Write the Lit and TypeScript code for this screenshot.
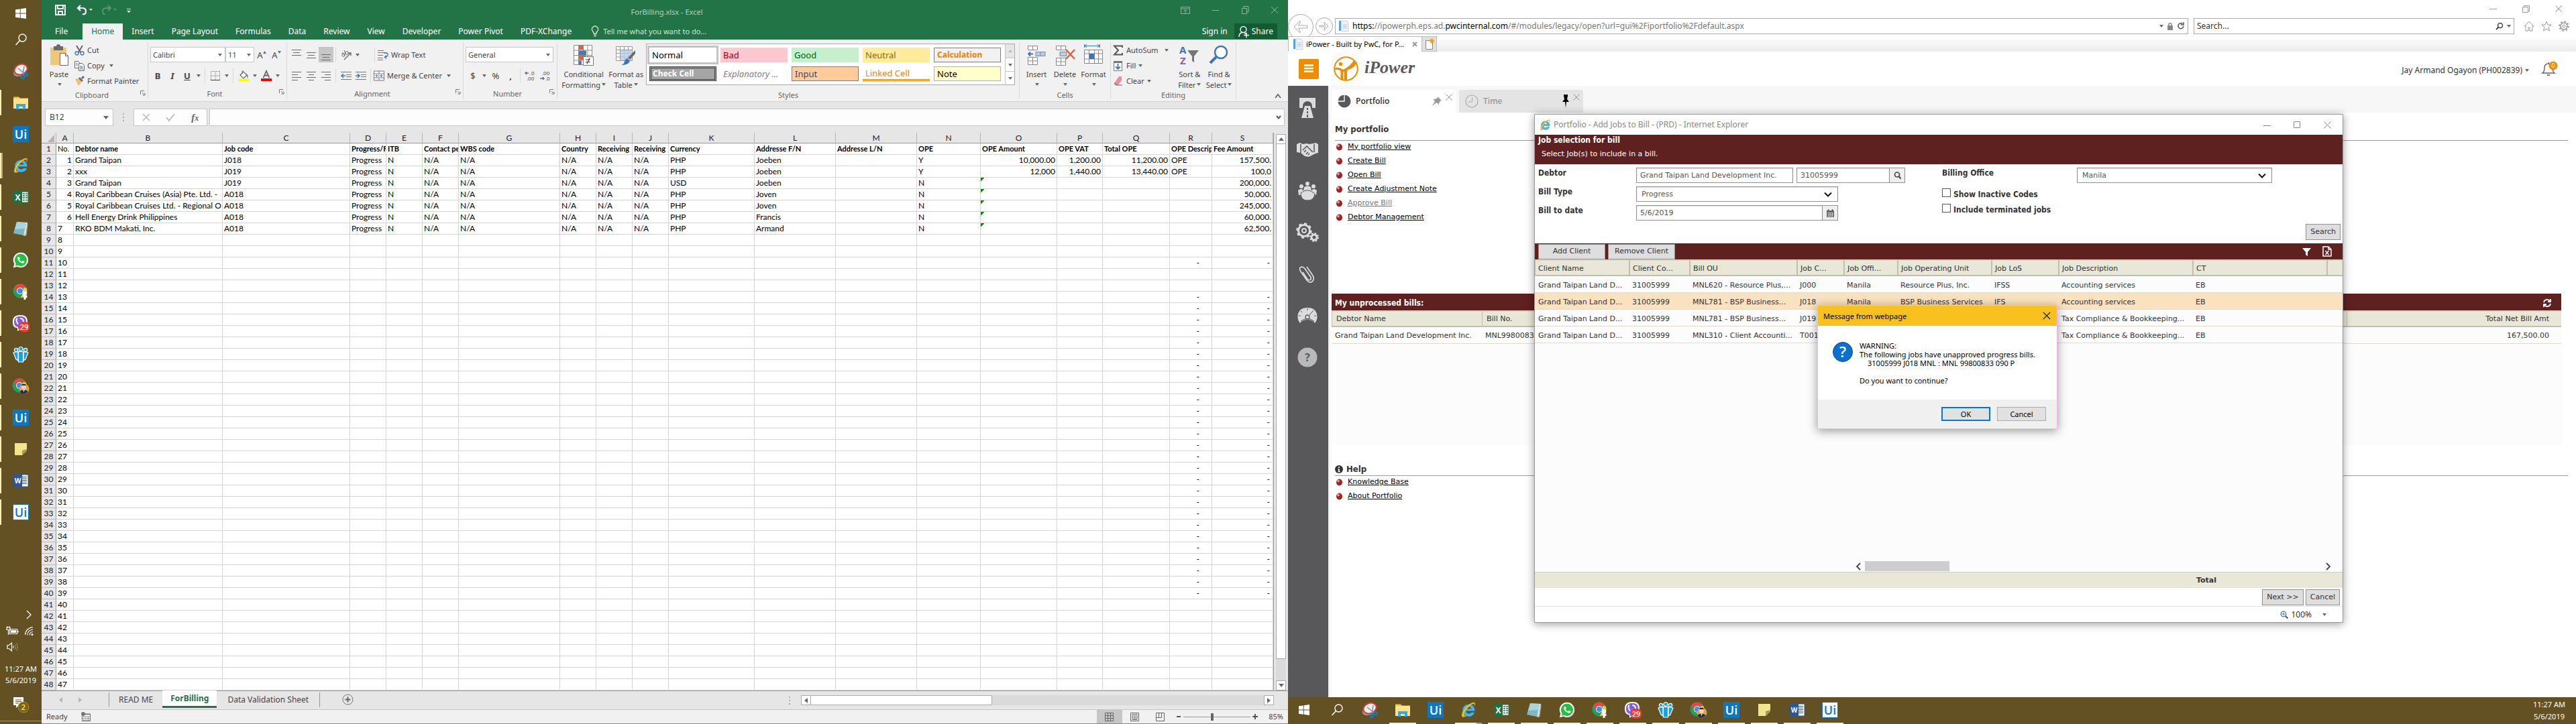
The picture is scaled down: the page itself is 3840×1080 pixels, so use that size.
import { LitElement, html, svg, css, nothing, TemplateResult, SVGTemplateResult } from "lit";
import { customElement, property } from "lit/decorators.js";
import { classMap } from "lit/directives/class-map.js";

/* ---------- shared helpers ---------- */

const pic = (w: number, h: number, body: SVGTemplateResult) =>
  html`<svg class="pic" width=${w} height=${h} viewBox="0 0 ${w} ${h}" aria-hidden="true">${body}</svg>`;

const base = css`
  * { box-sizing: border-box; }
  .pic { display: block; flex: none; overflow: visible; }
  button, input, select { font: inherit; color: inherit; margin: 0; border-radius: 0; }
  button { background: none; border: 0; padding: 0; display: flex; align-items: center; justify-content: center; white-space: nowrap; }
  select { appearance: none; }
  a { color: inherit; }
  table { border-collapse: separate; border-spacing: 0; table-layout: fixed; }
  th, td { text-align: left; font-weight: 400; white-space: nowrap; overflow: hidden; }
`;

const caret = html`<svg class="pic" width="6" height="4" viewBox="0 0 6 4" aria-hidden="true"><path d="M0 0h6L3 4z" fill="#666"/></svg>`;

/* ---------- application icons ---------- */

const uiIcon = (inverse: boolean) => pic(24, 24, svg`
  <rect x=".5" y=".5" width="23" height="23" fill=${inverse ? "#fff" : "#0b77c2"} stroke="#0b77c2"/>
  <text x="12" y="18.5" text-anchor="middle" font-family="Open Sans, sans-serif" font-size="18" font-weight="600" fill=${inverse ? "#0b77c2" : "#fff"}>Ui</text>`);

const ieBody = svg`
  <path d="M21.5 13.6H8.2c.3 2.700 2 4 4.300 4 1.700 0 2.800-.7 3.400-1.700h5.200c-1.300 3.800-4.700 5.900-8.700 5.900C7 21.800 3.200 18 3.200 12.800S7 3.800 12.400 3.800c5.500 0 9.200 4 9.100 9.800zM16.300 10.300c-.3-1.900-1.800-3.100-3.900-3.100s-3.700 1.200-4.100 3.100z" fill="#3fb8ec" stroke="#1b84c4" stroke-width=".5"/>
  <path d="M20.500 6.500C22.500 3 22 .9 19.600 1 16 1.200 9.500 5.500 5.500 11.500 1.600 17.400 1 22.500 4 22.600c1.500 0 3.500-.9 5.500-2.200-2.600.7-4.400.4-4.500-1.300-.2-2.600 3-7.500 6.700-11.100C15.200 4.600 18.500 2.300 20 2.800c1 .3 1 1.700.5 3.700z" fill="#f9c623" stroke="#c98f10" stroke-width=".4"/>`;

const chromeBody = svg`
  <circle cx="11" cy="11" r="10.500" fill="#1fa15d"/>
  <path d="M11 .5a10.500 10.500 0 0 1 9.100 5.200H11L6.400 13 2 5.700A10.500 10.500 0 0 1 11 .5z" fill="#dd4b3e"/>
  <path d="M20.300 6.200A10.500 10.500 0 0 1 11.500 21.500L16 13V6.200z" fill="#fcc934"/>
  <circle cx="11" cy="11" r="5" fill="#fff"/><circle cx="11" cy="11" r="4" fill="#4b87f0"/>`;

const apps: Record<string, TemplateResult> = {
  start: pic(24, 24, svg`<path d="M4 6.300l6.800-.9v6.200H4zm7.700-1L20 4v7.600h-8.300zM4 12.500h6.800v6.200L4 17.700zm7.700 0H20V20l-8.300-1.200z" fill="#fff"/>`),
  search: pic(24, 24, svg`<circle cx="14.500" cy="9.500" r="5.500" fill="none" stroke="#fff" stroke-width="1.400"/><path d="M10.500 13.600L4.500 20" stroke="#fff" stroke-width="1.500"/>`),
  snip: pic(24, 24, svg`<ellipse cx="10.500" cy="13" rx="10" ry="6.500" fill="#9a9a94" transform="rotate(-22 10.500 13)"/><ellipse cx="12" cy="9.500" rx="10" ry="7.500" fill="#ececea" stroke="#d13b3b" stroke-width="2" transform="rotate(-22 12 9.500)"/><path d="M8 8l11 9M17 5l-2 13" stroke="#8a8f94" stroke-width="1.500"/><circle cx="20.500" cy="17" r="2.300" fill="none" stroke="#1c79b8" stroke-width="2"/><circle cx="15" cy="21" r="2.200" fill="none" stroke="#1c79b8" stroke-width="2"/>`),
  folder: pic(24, 24, svg`<path d="M1 3.500h8l2 2h12v15H1z" fill="#f3c54b"/><path d="M1 6h22v15H1z" fill="#fde491"/><path d="M5 22v-8h14v8h-4v-4H9v4z" fill="#36a9e0"/>`),
  ui: uiIcon(false),
  ui2: uiIcon(true),
  ie: pic(24, 24, ieBody),
  excel: pic(24, 24, svg`<path d="M12 4h11v16H12z" fill="#fff" stroke="#1e7145"/><path d="M15 7h3m1 0h3M15 10h3m1 0h3M15 13h3m1 0h3M15 16.500h3m1 0h3" stroke="#1e7145" stroke-width="1.600"/><path d="M1 3.500L14 1v22L1 20.500z" fill="#1e7145"/><text x="7.500" y="16.500" text-anchor="middle" font-family="Open Sans, sans-serif" font-size="12" font-weight="700" fill="#fff">X</text>`),
  notepad: pic(24, 24, svg`<path d="M7 2l15 1-3 20-4-1z" fill="#dfe6e6"/><path d="M6 2l14 2-4 18-15-3z" fill="#7fb6c4"/><path d="M6 2l14 2-2 8L3 13z" fill="#a9d4dc"/><path d="M16 21l4 1 2-17" fill="none" stroke="#b5b9a4" stroke-width="1"/>`),
  whatsapp: pic(24, 24, svg`<path d="M12 .8A11 11 0 0 1 23 12 11 11 0 0 1 12 23c-1.900 0-3.700-.5-5.200-1.300L.8 23.300l1.600-5.800A11 11 0 0 1 12 .8z" fill="#fff"/><path d="M12 2.800a9.100 9.100 0 1 1-4.800 16.900l-3.500 1 1-3.400A9.100 9.100 0 0 1 12 2.800z" fill="#27bf43"/><path d="M8.300 7c-1.500.8-1.400 2.600-.5 4.300 1.400 2.700 3.600 4.700 6.500 5.300 1.600.3 3.400-.8 3.300-2.400l-2.700-1.400-1.500 1.600c-1.800-.7-3-2-3.700-3.500l1.100-1.400L9.600 7z" fill="#fff"/>`),
  chrome: pic(24, 24, svg`${chromeBody}<circle cx="18" cy="14.500" r="3.300" fill="#fff"/><path d="M14.500 17.500h7v3l-2 1V24h-3v-2.500z" fill="#fff"/>`),
  viber: pic(26, 26, svg`<path d="M12 1c8 0 11 3 11 10s-3 10.500-10 10.500L8 25v-4.500C3 19.500 1 17 1 11S4 1 12 1z" fill="#fff"/><path d="M12 3c7 0 9 2.500 9 8s-2.500 8.500-9 8.500l-3 2.500v-3c-4-1-6-2.500-6-8s3-8 9-8z" fill="#7d5fe0"/><path d="M8 6c-3 1.500-1 6 1 8.500M12 6c3 0 5 2 5 5" stroke="#fff" stroke-width="2" fill="none"/><rect x="10" y="11" width="16" height="15" rx="6" fill="#f4392f"/><text x="18" y="22.500" text-anchor="middle" font-family="Open Sans, sans-serif" font-size="11" font-weight="600" fill="#fff">29</text>`),
  teams: pic(24, 24, svg`<g fill="#16a3dd" stroke="#fff" stroke-width="1.200"><circle cx="5" cy="5" r="2.700"/><circle cx="19" cy="5" r="2.700"/><path d="M1 9l3-1h4v13l-3-2-2-5zM16 8h4l3 1-2 5-2 5-3 2z"/><circle cx="12" cy="3.500" r="3"/><path d="M8.500 7.500h7V23h-7z"/></g>`),
  chrome2: pic(26, 24, svg`${chromeBody}<circle cx="18" cy="16" r="7.500" fill="#d9a254"/><circle cx="17.500" cy="13.500" r="3.500" fill="#f0d0b8"/><path d="M14 11c1-3 6-3 7 0z" fill="#2b211c"/><path d="M11.500 20c2-3 10-3 12 0-2 4-10 5-12 0z" fill="#262b45"/><path d="M16.500 17.500h2l-1 4z" fill="#fff"/>`),
  note: pic(24, 24, svg`<path d="M3 3h18v11l-7 7H3z" fill="#f1e58f"/><path d="M21 12v2.500L14 21v-7z" fill="#a89b57"/>`),
  word: pic(24, 24, svg`<path d="M12 3h11v18H12z" fill="#fff" stroke="#2b579a"/><path d="M14 6.500h7M14 9h7M14 11.500h7M14 14h7M14 16.500h7" stroke="#2b579a" stroke-width="1.100"/><path d="M1 3.500L14 1v22L1 20.500z" fill="#2b579a"/><text x="7.500" y="16" text-anchor="middle" font-family="Open Sans, sans-serif" font-size="10" font-weight="700" fill="#fff">W</text>`),
};

const pinned: Array<[string, string, string]> = [
  ["start", "Start", "first"], ["search", "Search", ""], ["snip", "Snipping Tool", ""],
  ["folder", "File Explorer", "on"], ["ui", "UiPath Studio", ""], ["ie", "Internet Explorer", "on many"],
  ["excel", "Excel", "on"], ["notepad", "Notepad", "on"], ["whatsapp", "WhatsApp", "on"],
  ["chrome", "Chrome", "on"], ["viber", "Viber", "on"], ["teams", "Teams", "on"],
  ["chrome2", "Chrome profile", "on"], ["ui", "UiPath Robot", "on"], ["note", "Sticky Notes", "on"],
  ["word", "Word", "on"], ["ui2", "UiPath", "on"],
];

@customElement("task-bar")
class TaskBar extends LitElement {
  @property({ type: Boolean, reflect: true }) vertical = false;

  static styles = [base, css`
    :host { display: flex; background: #635124; color: #fff; font: 11px/18px "Noto Sans", "Open Sans", sans-serif; height: 40px; padding-left: 4px; }
    :host([vertical]) { flex-direction: column; width: 62px; height: auto; padding: 0; }
    .apps { display: flex; gap: 9px; }
    .app { width: 40px; height: 40px; border-bottom: 2px solid transparent; }
    .app.on { border-color: #ffeeb4; }
    .app.many { border-image: linear-gradient(90deg, #ffeeb4 78%, #b7a675 78%) 2; border-width: 0 0 2px; }
    :host([vertical]) .apps { flex-direction: column; padding-top: 8px; }
    :host([vertical]) .app { width: 60px; height: 38px; border-bottom: 0; border-left: 2px solid transparent; }
    :host([vertical]) .app.first { height: 23px; }
    :host([vertical]) .app.on { border-color: #ffeeb4; }
    :host([vertical]) .app.many { border-image: none; box-shadow: inset 2px 0 #b7a675; }
    .spring { flex: 1; }
    .clock { padding: 2px 16px 0 0; text-align: center; }
    :host([vertical]) .clock { padding: 0; line-height: 17px; }
    .tray { display: grid; grid-template-columns: 24px 24px; justify-content: center; justify-items: center; row-gap: 8px; padding-bottom: 16px; }
    .wide { grid-column: 2; }
    .notes { display: grid; justify-content: center; padding: 16px 0 12px; }
    .desk { border-top: 1px solid #a19771; height: 5px; }
  `];

  render() {
    return html`
      <div class="apps">${pinned.map(([k, name, cls]) => html`<button class="app ${cls}" aria-label=${name}>${apps[k]}</button>`)}</div>
      <div class="spring"></div>
      ${this.vertical ? html`
        <div class="tray">
          <span class="wide">${pic(16, 16, svg`<path d="M5 2l6 6-6 6" fill="none" stroke="#fff" stroke-width="1.300"/>`)}</span>
          ${pic(18, 16, svg`<path d="M4.500 5.500h11v7h-11zM17 7.500v3" fill="none" stroke="#fff" stroke-width="1.200"/><path d="M6 7h8v4H6z" fill="#fff"/><path d="M0 3h5v3.500H0zM2.500 6v8M1 1v2m3-2v2" fill="#635124" stroke="#fff" stroke-width="1.200"/>`)}
          ${pic(14, 16, svg`<g fill="none" stroke="#fff" stroke-width="1.100"><path d="M1.500 14A12 12 0 0 1 13 2.500M4.500 14.500A9 9 0 0 1 13 6M8 14.500a5 5 0 0 1 5-5"/></g><circle cx="12" cy="13.500" r="1.500" fill="#fff"/>`)}
          ${pic(18, 16, svg`<path d="M1 5.500h2.500l4-3.500v12l-4-3.500H1z" fill="none" stroke="#fff" stroke-width="1.200"/><path d="M9.500 6q1.500 2 0 4" fill="none" stroke="#fff"/><path d="M12 4q2.500 4 0 8M14.500 2.500q3.500 5.500 0 11" fill="none" stroke="#a0956f"/>`)}
        </div>` : nothing}
      <div class="clock">11:27 AM<br>5/6/2019</div>
      ${this.vertical ? html`
        <div class="notes">${pic(24, 24, svg`<path d="M1 1h15v12H9l-4 4v-4H1z" fill="#fff"/><path d="M4 5h9M4 7.500h9M4 10h5" stroke="#635124"/><circle cx="16" cy="16" r="8" fill="#846504" stroke="#b0924a" stroke-width=".8"/><text x="16" y="20" text-anchor="middle" font-family="Open Sans, sans-serif" font-size="11" fill="#fff">2</text>`)}</div>
        <div class="desk"></div>` : nothing}
    `;
  }
}

/* ---------- spreadsheet window ---------- */

const alignPic = (rows: Array<[number, number, number]>) =>
  pic(16, 16, svg`${rows.map(([y, a, b]) => svg`<path d="M${a} ${y}.5H${b}" stroke="#6a6a6a"/>`)}`);

const cols: Array<[string, number]> = [
  ["A", 26], ["B", 222], ["C", 190], ["D", 54], ["E", 54], ["F", 54], ["G", 151], ["H", 54], ["I", 54], ["J", 54],
  ["K", 128], ["L", 121], ["M", 121], ["N", 95], ["O", 114], ["P", 68], ["Q", 100], ["R", 63], ["S", 92],
];

const heads = ["No.", "Debtor name", "Job code", "Progress/F", "ITB", "Contact pe", "WBS code", "Country", "Receiving", "Receiving", "Currency",
  "Addresse F/N", "Addresse L/N", "OPE", "OPE Amount", "OPE VAT", "Total OPE", "OPE Descrip", "Fee Amount"];

const job = (n: string, debtor: string, code: string, cur: string, who: string, ope: string, a: string, v: string, t: string, d: string, fee: string) =>
  [n, debtor, code, "Progress", "N", "N/A", "N/A", "N/A", "N/A", "N/A", cur, who, "", ope, a, v, t, d, fee];

const jobs = [
  job("1", "Grand Taipan", "J018", "PHP", "Joeben", "Y", "10,000.00", "1,200.00", "11,200.00", "OPE", "157,500."),
  job("2", "xxx", "J019", "PHP", "Joeben", "Y", "12,000", "1,440.00", "13,440.00", "OPE", "100,0"),
  job("3", "Grand Taipan", "J019", "USD", "Joeben", "N", "", "", "", "", "200,000."),
  job("4", "Royal Caribbean Cruises (Asia) Pte. Ltd. -", "A018", "PHP", "Joven", "N", "", "", "", "", "50,000."),
  job("5", "Royal Caribbean Cruises Ltd. - Regional O", "A018", "PHP", "Joven", "N", "", "", "", "", "245,000."),
  job("6", "Hell Energy Drink Philippines", "A018", "PHP", "Francis", "N", "", "", "", "", "60,000."),
  job("7", "RKO BDM Makati, Inc.", "A018", "PHP", "Armand", "N", "", "", "", "", "62,500."),
];

const cellStyles: Array<[string, string]> = [
  ["Normal", "normal"], ["Bad", "bad"], ["Good", "good"], ["Neutral", "neutral"], ["Calculation", "calc"],
  ["Check Cell", "check"], ["Explanatory ...", "expl"], ["Input", "inp"], ["Linked Cell", "linked"], ["Note", "note"],
];

@customElement("sheet-window")
class SheetWindow extends LitElement {
  static styles = [base, css`
    :host { display: flex; flex-direction: column; min-width: 0; background: #e6e6e6; color: #444; font: 11px/16px "Noto Sans", "Open Sans", sans-serif; }
    .title { display: flex; align-items: center; height: 35px; background: #227447; color: #b2d2c0; padding: 0 14px 0 20px; }
    .quick, .wins { display: flex; align-items: center; flex: 1; padding-bottom: 5px; }
    .quick { gap: 16px; }
    .wins { justify-content: flex-end; gap: 32px; }
    .tabs { display: flex; height: 24px; background: #227447; color: #fff; padding-right: 16px; font-size: 12px; }
    .tab { padding: 0 13px; }
    .tab.file { padding: 0 22px 0 20px; }
    .tab.active { background: #f1f1f1; color: #227447; }
    .tab.tell { gap: 6px; color: #cfe3d7; padding-left: 16px; font-size: 11px; }
    .push { margin-left: auto; }
    .share { background: #125c31; padding: 0 6px; gap: 4px; margin: 0 0 1px 10px; }

    .ribbon { display: flex; height: 93px; background: #f1f1f1; border-bottom: 1px solid #d2d2d2; }
    .group { display: flex; flex-direction: column; padding: 0 3px; border-right: 1px solid #d8d8d8; margin: 4px 0; height: 84px; }
    .body { display: flex; flex: 1; }
    .cap { display: flex; height: 14px; line-height: 14px; color: #666; text-align: center; }
    .cap span { flex: 1; }
    .stack { display: flex; flex-direction: column; }
    .stack button { height: 23px; justify-content: flex-start; gap: 4px; }
    .rows { display: flex; flex-direction: column; gap: 8px; padding-top: 7px; flex: 1; }
    .row { display: flex; height: 23px; align-items: center; }
    .sq { width: 22px; height: 23px; font-size: 13px; }
    .sq.on { background: #c6c6c6; }
    .thin { width: 12px; height: 23px; }
    .bar { width: 1px; height: 22px; background: #d8d8d8; margin: 0 4px 0 3px; }
    .gap { width: 16px; }
    .drop { display: grid; align-items: center; border: 1px solid #c6c6c6; background: #fff; height: 23px; }
    .drop > * { grid-area: 1 / 1; }
    .drop > svg { justify-self: end; margin-right: 4px; pointer-events: none; }
    .drop select { border: 0; background: none; width: 100%; height: 21px; padding: 0 3px; line-height: 20px; }
    .big { flex-direction: column; justify-content: flex-start; padding-top: 4px; }
    .big .txt { display: block; line-height: 16px; text-align: center; margin-top: 4px; white-space: normal; }
    .big .txt svg { display: inline-block; margin: 0 0 3px 2px; }
    .lab { display: flex; gap: 4px; align-items: center; }
    .gallery { display: grid; grid-template-columns: repeat(5, 100px) 14px; grid-template-rows: 22px 22px; gap: 6px; background: #fff; border: 1px solid #aaa; padding: 5px 0 5px 4px; height: 62px; margin: 2px 3px 0; }
    .gallery .pick { justify-content: flex-start; padding: 0 4px; font-size: 13px; }
    .normal { outline: 3px solid #c4c4c4; color: #000; }
    .bad { background: #ffc7ce; color: #9c0006; }
    .good { background: #c6efce; color: #006100; }
    .neutral { background: #ffeb9c; color: #9c6500; }
    .gallery .calc { background: #f2f2f2; color: #fa7d00; font-weight: 700; font-size: 12px; border: 1px solid #7f7f7f; }
    .gallery .check { background: #a5a5a5; color: #fff; font-weight: 700; font-size: 12px; border: 3px double #3f3f3f; padding: 0 2px; }
    .expl { color: #7f7f7f; font-style: italic; }
    .pick.inp { background: #ffcc99; color: #3f3f76; border: 1px solid #7f7f7f; }
    .pick.linked { color: #fa7d00; border-bottom: 3px double #fa7d00; }
    .pick.note { background: #ffffcc; color: #000; border: 1px solid #b2b2b2; }
    .scroll { grid-column: 6; grid-row: 1 / 3; display: grid; grid-template-rows: 1fr 1fr 1fr; margin: -5px 0; border-left: 1px solid #c6c6c6; }
    .scroll button + button { border-top: 1px solid #c6c6c6; }
    .scroll button:first-child { background: #e6e6e6; }
    .edits { width: 93px; }
    .collapse { align-self: end; width: 30px; height: 16px; margin-left: auto; }

    .formula { display: flex; height: 46px; padding: 10px 5px; align-items: stretch; }
    .box { display: flex; align-items: center; background: #fdfdfd; border: 1px solid #c6c6c6; }
    .name { width: 102px; padding: 0 6px; justify-content: space-between; }
    .name input { border: 0; background: none; width: 70px; padding: 0; font-size: 12px; }
    .fx { width: 110px; justify-content: space-around; margin-right: 3px; }
    .fx i { font: italic 700 15px/18px "Liberation Serif", serif; color: #666; }
    .fx small { font-size: 12px; }
    .fxin { flex: 1; padding-right: 4px; }
    .fxin input { flex: 1; border: 0; background: none; }
    .dots { width: 30px; display: grid; place-items: center; }

    .grid { display: flex; }
    .sheet { flex: 1; width: 100%; background: #fff; color: #000; border-right: 1px solid #999; font-family: Lato, "Noto Sans", sans-serif; font-size: 12px; }
    .sheet th, .sheet td { height: 17px; line-height: 16px; padding: 0 2px; border-right: 1px solid #d4d4d4; border-bottom: 1px solid #d4d4d4; }
    .sheet thead th { height: 16px; line-height: 15px; background: #e6e6e6; text-align: center; border-right-color: #b5b5b5; border-bottom-color: #999; color: #222; }
    .sheet tbody th { background: #e6e6e6; text-align: center; border-right-color: #999; border-bottom-color: #bbb; color: #222; padding: 0; }
    .sheet .head td { font-weight: 700; font-size: 11px; padding-right: 0; }
    .sheet .head td:first-of-type { font-weight: 400; }
    .sheet .r { text-align: right; }
    .sheet .dash { text-align: right; padding-right: 18px; }
    .sheet .enddash { text-align: right; padding-right: 4px; }
    .sheet .err { background: linear-gradient(135deg, #0a8a0a 4px, transparent 4px); }
    .vs { display: flex; flex-direction: column; width: 15px; margin: 2px 3px 0; background: #dadada; }
    .sb { background: #fff; border: 1px solid #ababab; height: 15px; }
    .vs .thumb { background: #fff; border: 1px solid #ababab; border-top: 0; height: 768px; }
    .push-y { margin-top: auto; }

    .foot { display: flex; height: 28px; align-items: flex-start; border-top: 1px solid #999; padding-right: 21px; }
    .nav { display: flex; gap: 24px; width: 100px; padding: 9px 0 0 26px; }
    .st { height: 22px; padding: 0 16px; font-size: 12px; margin-top: 2px; }
    .st.sel { background: #fff; color: #227447; font-weight: 700; border-bottom: 3px solid #227447; margin-top: -1px; padding: 0 12px; height: 26px; }
    .st.read { border-left: 1px solid #999; padding: 0 14px; }
    .st.data { border-right: 1px solid #999; }
    .plus { margin: 4px 0 0 33px; }
    .grip { margin-left: auto; padding-top: 8px; }
    .hs { display: flex; width: 705px; height: 15px; background: #dadada; margin: 6px 0 0 16px; }
    .hs .sb { width: 15px; }
    .hs .thumb { width: 270px; background: #fff; border: 1px solid #ababab; border-left: 0; }
    .status { display: flex; align-items: center; height: 22px; background: #f1f1f1; border-top: 1px solid #c6c6c6; border-bottom: 1px solid #888; padding: 0 7px; }
    .ready { margin-right: 20px; }
    .views { display: flex; margin-left: auto; align-self: stretch; }
    .views button { width: 38px; }
    .views button:first-child { background: #c6c6c6; }
    .zoom { display: flex; align-items: center; gap: 3px; margin: 0 16px 0 4px; }
    .zoom input { appearance: none; width: 100px; height: 16px; background: linear-gradient(#9a9a9a, #9a9a9a) center / 100% 1px no-repeat; }
    .zoom input::-webkit-slider-thumb { appearance: none; width: 4px; height: 11px; background: #666; }
  `];

  private launcher = pic(8, 8, svg`<path d="M.5 6V.5H6M3 3l3.500 3.500M7 3.500V7H3.500" fill="none" stroke="#777"/>`);

  private group(width: number, caption: string, body: TemplateResult, launch = true) {
    return html`<section class="group" style="width:${width}px">
      <div class="body">${body}</div>
      <div class="cap"><span>${caption}</span>${launch ? this.launcher : nothing}</div>
    </section>`;
  }

  private big(width: number, icon: TemplateResult, text: TemplateResult) {
    return html`<button class="big" style="width:${width}px">${icon}<span class="txt">${text}</span></button>`;
  }

  private drop(width: number, label: string) {
    return html`<span class="drop" style="width:${width}px"><select aria-label=${label}><option>${label}</option></select>${caret}</span>`;
  }

  private ribbon() {
    const gridPic = svg`<path d="M.5.5h27v29H.5zM.5 8h27M.5 15.500h27M.5 23h27M7.500.5v29M14.500.5v29M21 .5v29" fill="#fff" stroke="#8a8a8a"/>`;
    return html`
      ${this.group(159, "Clipboard", html`
        ${this.big(46, pic(30, 32, svg`<path d="M2 4h24v26H2z" fill="#eec77d"/><path d="M7 2h4a3 3 0 0 1 6 0h4v6H7z" fill="#6a6a6a"/><path d="M16.500 12.500h8l4 4v14h-12z" fill="#fff" stroke="#6a6a6a"/><path d="M24.500 12.500v4h4" fill="none" stroke="#6a6a6a"/>`), html`Paste<br>${caret}`)}
        <div class="stack">
          <button>${pic(15, 16, svg`<path d="M3 1l6 10M12 1L6 11" stroke="#666" stroke-width="2"/><circle cx="3.500" cy="12.500" r="2.500" fill="none" stroke="#3c76b4" stroke-width="1.300"/><circle cx="11.500" cy="12.500" r="2.500" fill="none" stroke="#3c76b4" stroke-width="1.300"/>`)}Cut</button>
          <button>${pic(15, 16, svg`<path d="M.5 1.500h5l2 2v8h-7z" fill="#fff" stroke="#666"/><path d="M6.500 4.500h5l3 3v8h-8z" fill="#fff" stroke="#666"/><path d="M2 5h3M2 7h3M8 9h4M8 11h5M8 13h5" stroke="#3c76b4"/>`)}Copy&nbsp; ${caret}</button>
          <button>${pic(15, 16, svg`<path d="M1 5l5-1 5 5-5 6z" fill="#eec077"/><path d="M6 4l2-2 5 5-2 2zM10 3l3-3 2 2-3 3z" fill="#6a6a6a"/>`)}Format Painter</button>
        </div>`)}
      ${this.group(207, "Font", html`<div class="rows">
        <div class="row">${this.drop(112, "Calibri")}${this.drop(43, "11")}
          <button class="sq" aria-label="Grow font">A${pic(5, 12, svg`<path d="M0 4L2.500 0 5 4z" fill="#3c76b4"/>`)}</button>
          <button class="sq" aria-label="Shrink font">A${pic(5, 12, svg`<path d="M0 0h5L2.500 4z" fill="#3c76b4"/>`)}</button></div>
        <div class="row"><button class="sq"><b>B</b></button><button class="sq"><b><i>I</i></b></button><button class="sq"><b><u>U</u></b></button><button class="thin" aria-label="Underline options">${caret}</button><span class="bar"></span>
          <button class="sq" aria-label="Borders">${pic(14, 14, svg`<path d="M.5 0v14M7 0v14M13.500 0v14M0 .5h14M0 7h14" stroke="#777" stroke-dasharray="1 1"/><path d="M0 13.500h14" stroke="#444"/>`)}</button><button class="thin" aria-label="Border options">${caret}</button><span class="bar"></span>
          <button class="sq" aria-label="Fill color">${pic(16, 16, svg`<path d="M3 7l5-5 5 5-5 5z" fill="#fff" stroke="#666" stroke-width="1.200"/><path d="M6 5V1h2" stroke="#666" fill="none"/><path d="M12 5q4 2 2 7z" fill="#3c76b4"/><path d="M0 12h16v4H0z" fill="#ff0"/>`)}</button><button class="thin" aria-label="Fill options">${caret}</button>
          <button class="sq" aria-label="Font color">${pic(16, 16, svg`<path d="M3.500 11L8 1l4.500 10M5.500 7.500h5" fill="none" stroke="#666" stroke-width="1.800"/><path d="M0 12h16v4H0z" fill="#f00"/>`)}</button><button class="thin" aria-label="Font color options">${caret}</button></div>
      </div>`)}
      ${this.group(263, "Alignment", html`<div class="rows">
        <div class="row"><button class="sq" aria-label="Top">${alignPic([[0, 1, 15], [4, 3, 13], [8, 1, 15]])}</button><button class="sq" aria-label="Middle">${alignPic([[4, 1, 15], [8, 3, 13], [12, 1, 15]])}</button><button class="sq on" aria-label="Bottom">${alignPic([[7, 1, 15], [11, 3, 13], [15, 1, 15]])}</button><span class="bar"></span>
          <button class="sq" aria-label="Orientation">${pic(16, 16, svg`<path d="M5 15L15 5M11 5h4v4" stroke="#666" fill="none" stroke-width="1.300"/><circle cx="4" cy="8" r="2.300" fill="none" stroke="#666"/><circle cx="9" cy="5" r="2.300" fill="none" stroke="#666"/><path d="M6 9L2 4M7 6L5 1" stroke="#666"/>`)}</button><button class="thin" aria-label="Orientation options">${caret}</button><span class="gap"></span><span class="bar"></span>
          <button class="lab">${pic(16, 16, svg`<path d="M0 1.500h9M0 4.500h13M0 8.500h8M0 12.500h8M0 15.500h8" stroke="#777"/><path d="M9 5h3q4 0 3 4-1 2-4 2m2-2.500L10.500 11l2.500 2.500" fill="none" stroke="#3c76b4" stroke-width="1.300"/>`)}Wrap Text</button></div>
        <div class="row"><button class="sq" aria-label="Align left">${alignPic([[2, 1, 15], [6, 1, 10], [10, 1, 15], [14, 1, 10]])}</button><button class="sq" aria-label="Center">${alignPic([[2, 1, 15], [6, 4, 12], [10, 1, 15], [14, 4, 12]])}</button><button class="sq" aria-label="Align right">${alignPic([[2, 1, 15], [6, 6, 15], [10, 1, 15], [14, 6, 15]])}</button><span class="bar"></span>
          <button class="sq" aria-label="Decrease indent">${pic(16, 16, svg`<path d="M0 2.500h16M8 6.500h8M8 9.500h8M0 13.500h16" stroke="#777"/><path d="M7 8H1m3-3L1 8l3 3" fill="none" stroke="#3c76b4" stroke-width="1.500"/>`)}</button>
          <button class="sq" aria-label="Increase indent">${pic(16, 16, svg`<path d="M0 2.500h16M8 6.500h8M8 9.500h8M0 13.500h16" stroke="#777"/><path d="M0 8h6M3 5l3 3-3 3" fill="none" stroke="#3c76b4" stroke-width="1.500"/>`)}</button><span class="bar"></span>
          <button class="lab">${pic(16, 16, svg`<path d="M.5 1h15v14H.5zM.5 5h15M.5 11h15M8 1v4M8 11v4" fill="#fff" stroke="#777"/><path d="M3 8h10M5 6L3 8l2 2M11 6l2 2-2 2" fill="none" stroke="#3c76b4"/>`)}Merge &amp; Center&nbsp; ${caret}</button></div>
      </div>`)}
      ${this.group(140, "Number", html`<div class="rows">
        <div class="row">${this.drop(131, "General")}</div>
        <div class="row"><button class="sq">$</button><button class="thin" aria-label="Currency options">${caret}</button><button class="sq">%</button><button class="sq"><b>,</b></button><span class="bar"></span>
          <button class="sq" aria-label="Increase decimal">${pic(18, 16, svg`<path d="M1 4h5M3 2L1 4l2 2" fill="none" stroke="#3c76b4" stroke-width="1.300"/><text x="8" y="7" font-family="Open Sans, sans-serif" font-size="8" fill="#444">.0</text><text x="3" y="15" font-family="Open Sans, sans-serif" font-size="8" fill="#444">.00</text>`)}</button>
          <button class="sq" aria-label="Decrease decimal">${pic(18, 16, svg`<path d="M1 12h6M5 10l2 2-2 2" fill="none" stroke="#3c76b4" stroke-width="1.300"/><text x="4" y="7" font-family="Open Sans, sans-serif" font-size="8" fill="#444">.00</text><text x="9" y="15" font-family="Open Sans, sans-serif" font-size="8" fill="#444">.0</text>`)}</button></div>
      </div>`)}
      ${this.group(689, "Styles", html`
        ${this.big(74, pic(30, 32, svg`${gridPic}<path d="M8 .5h6v6.500H8zM8 16h10v6.500H8z" fill="#dc6141"/><path d="M8 8.500h11V15H8zM8 23.500h4v6H8z" fill="#4579b8"/><path d="M14.500 17.500h15v13h-15z" fill="#fff" stroke="#777"/><path d="M18 22h7M18 25.500h7M24 19.500l-4 9" stroke="#444" stroke-width="1.200"/>`), html`Conditional<br>Formatting${caret}`)}
        ${this.big(55, pic(30, 32, svg`<path d="M.5 2.500h24v21H.5zM.5 7.500h24M.5 12.500h24M.5 18h24M6.500 2.500v21M12.500 2.500v21M18.500 2.500v21" fill="#fff" stroke="#999"/><path d="M7 8h17v15H7z" fill="#b5cdeb" opacity=".8"/><path d="M29 8v5l-8 9-3-3z" fill="#6a6a6a"/><path d="M17 20l4 4q-2 6-13 6 5-2 5-6 2-4 4-4z" fill="#3c76b4"/>`), html`Format as<br>Table${caret}`)}
        <div class="gallery">
          ${cellStyles.map(([t, c]) => html`<button class="pick ${c}">${t}</button>`)}
          <div class="scroll"><button aria-label="Up">${pic(6, 4, svg`<path d="M0 4h6L3 0z" fill="#bbb"/>`)}</button><button aria-label="Down">${caret}</button><button aria-label="More">${caret}</button></div>
        </div>`, false)}
      ${this.group(136, "Cells", html`
        ${this.big(44, pic(28, 32, svg`<path d="M1.500 1.500h14v6h-14zM8.500 1.500v6M1.500 18.500h14v11h-14zM8.500 18.500v11M1.500 24h14" fill="#fff" stroke="#888"/><path d="M13 10.500h14v6H13zM20 10.500v6" fill="#b5cdeb" stroke="#888"/><path d="M9 13.500H2M5 10.500l-3 3 3 3" fill="none" stroke="#3c76b4" stroke-width="1.800"/>`), html`Insert<br>${caret}`)}
        ${this.big(41, pic(30, 32, svg`<path d="M1.500 1.500h14v6h-14zM8.500 1.500v6M1.500 19.500h14v11h-14zM8.500 19.500v11M1.500 25h14" fill="#fff" stroke="#888"/><path d="M7 10.500h10v6H7z" fill="#b5cdeb" stroke="#888"/><path d="M16 7l13 14M29 7L16 21" stroke="#dc6141" stroke-width="2.500"/>`), html`Delete<br>${caret}`)}
        ${this.big(44, pic(30, 32, svg`<path d="M2 1.500h22M5-1L2 1.500 5 4M21-1l3 2.500L21 4M1.500-1v5M24.500-1v5" fill="none" stroke="#3c76b4"/><path d="M1.500 7.500h27v20h-27zM1.500 13h27M1.500 21h27M8.500 7.500v20M16.500 7.500v20M22.500 7.500v20" fill="#fff" stroke="#888"/><path d="M9 13h7v8H9z" fill="#3c76b4"/>`), html`Format<br>${caret}`)}`, false)}
      ${this.group(187, "Editing", html`
        <div class="stack edits">
          <button>${pic(16, 16, svg`<path d="M14 4V1.500H2L8 8l-6 6.500h12V12" fill="none" stroke="#555" stroke-width="2"/>`)}AutoSum&nbsp;&nbsp;${caret}</button>
          <button>${pic(16, 16, svg`<path d="M1.500 1.500h12v14h-12z" fill="#fff" stroke="#777"/><path d="M1 1h13v3H1z" fill="#777"/><path d="M7.500 5v8M4 9.500L7.500 13 11 9.500" fill="none" stroke="#3c76b4" stroke-width="1.800"/>`)}Fill${caret}</button>
          <button>${pic(16, 16, svg`<path d="M9 1h4v6l-5 7H5L2 11z" fill="#ea8fa0"/><path d="M2 11l3 3h9" fill="none" stroke="#666" stroke-width="1.200"/>`)}Clear${caret}</button>
        </div>
        ${this.big(44, pic(30, 32, svg`<text x="0" y="13" font-family="Open Sans, sans-serif" font-size="15" font-weight="700" fill="#3c76b4">A</text><text x="1" y="29" font-family="Open Sans, sans-serif" font-size="15" font-weight="700" fill="#8b5fb5">Z</text><path d="M12 8h17l-7 9v9l-3-2v-7z" fill="#777"/>`), html`Sort &amp;<br>Filter${caret}`)}
        ${this.big(44, pic(30, 32, svg`<circle cx="18" cy="11" r="9" fill="#fff" stroke="#3c76b4" stroke-width="2.500"/><path d="M11 18L2 27" stroke="#3c76b4" stroke-width="4"/>`), html`Find &amp;<br>Select${caret}`)}`, false)}
      <button class="collapse" aria-label="Collapse ribbon">${pic(10, 8, svg`<path d="M1 7l4-5 4 5" fill="none" stroke="#666" stroke-width="1.800"/>`)}</button>`;
  }

  private cell(v: string, c: number, r: number) {
    const right = r > 0 && ((c === 0 && r < 7) || (c >= 14 && c <= 16) || c === 18);
    return html`<td class=${classMap({ r: right, err: c === 14 && r > 2 })}>${v}</td>`;
  }

  render() {
    const menu = ["Insert", "Page Layout", "Formulas", "Data", "Review", "View", "Developer", "Power Pivot", "PDF-XChange"];
    const empties = Array.from({ length: 40 }, (_, i) => i + 8);
    return html`
      <div class="title">
        <div class="quick">
          ${pic(16, 16, svg`<path d="M1 1h14v14H1zM4 1v5h8V1M5 15v-5h6v5" fill="none" stroke="#fff" stroke-width="1.800"/>`)}
          ${pic(22, 16, svg`<path d="M2 5h7q5 0 5 5t-5 4M6 1L2 5l4 4" fill="none" stroke="#fff" stroke-width="2.200"/><path d="M19 6h5l-2.500 3z" fill="#fff"/>`)}
          ${pic(22, 16, svg`<path d="M13 5H6q-5 0-5 5t4 4M9 1l4 4-4 4" fill="none" stroke="#5b9675" stroke-width="1.800"/><path d="M17 6h5l-2.500 3z" fill="#5b9675"/>`)}
          ${pic(6, 8, svg`<path d="M-1 2.500h6" stroke="#fff"/><path d="M-1 5h6L2 8z" fill="#fff"/>`)}
        </div>
        <div>ForBilling.xlsx - Excel</div>
        <div class="wins">
          ${pic(14, 14, svg`<path d="M.5 2.500h13v10H.5zM.5 5h13M7 12V6.500M4.500 9L7 6.500 9.500 9" fill="none" stroke="#8ab79e"/>`)}
          ${pic(12, 12, svg`<path d="M1 6.500h10" stroke="#8ab79e"/>`)}
          ${pic(12, 12, svg`<path d="M1.500 3.500h7v8h-7zM4 3V.5h7V9H9" fill="none" stroke="#8ab79e"/>`)}
          ${pic(12, 12, svg`<path d="M1 1l10 10M11 1L1 11" stroke="#8ab79e"/>`)}
        </div>
      </div>
      <nav class="tabs">
        <button class="tab file">File</button><button class="tab active">Home</button>
        ${menu.map((m) => html`<button class="tab">${m}</button>`)}
        <button class="tab tell">${pic(12, 16, svg`<path d="M4 11q0-2-1.500-3.500a4.500 4.500 0 1 1 7 0Q8 9 8 11zM4 13h4M4.500 15h3" fill="none" stroke="#fff" stroke-width="1.100"/>`)}Tell me what you want to do...</button>
        <button class="push">Sign in</button>
        <button class="share">${pic(16, 18, svg`<circle cx="7.500" cy="6" r="4.500" fill="none" stroke="#fff" stroke-width="1.400"/><path d="M1 17q0-6 5-6.500M8.500 10.500l3 2.500M8 14.500h8M12 10.500v8" fill="none" stroke="#fff" stroke-width="1.400"/>`)}Share</button>
      </nav>
      <div class="ribbon">${this.ribbon()}</div>
      <div class="formula">
        <div class="box name"><input aria-label="Name box" value="B12">${pic(8, 5, svg`<path d="M0 0h8L4 5z" fill="#666"/>`)}</div>
        <div class="dots">${pic(2, 12, svg`<path d="M0 0h2v2H0zM0 5h2v2H0zM0 10h2v2H0z" fill="#aaa"/>`)}</div>
        <div class="box fx">
          ${pic(12, 12, svg`<path d="M1 1l10 10M11 1L1 11" stroke="#bbb" stroke-width="1.600"/>`)}
          ${pic(14, 12, svg`<path d="M1 6l4 5 8-10" fill="none" stroke="#bbb" stroke-width="2"/>`)}
          <i>f<small>x</small></i>
        </div>
        <div class="box fxin"><input aria-label="Formula">${pic(8, 6, svg`<path d="M1 1l3 3.500L7 1" fill="none" stroke="#555" stroke-width="2"/>`)}</div>
      </div>
      <div class="grid">
        <table class="sheet">
          <colgroup><col style="width:22px">${cols.map(([, w], i) => i < cols.length - 1 ? html`<col style="width:${w}px">` : html`<col>`)}</colgroup>
          <thead><tr><th>${pic(18, 12, svg`<path d="M17 1v11H7z" fill="#b5b5b5"/>`)}</th>${cols.map(([l]) => html`<th>${l}</th>`)}</tr></thead>
          <tbody>
            <tr class="head"><th>1</th>${heads.map((h, c) => this.cell(h, c, 0))}</tr>
            ${jobs.map((j, r) => html`<tr><th>${r + 2}</th>${j.map((v, c) => this.cell(v, c, r + 1))}</tr>`)}
            ${empties.map((n) => {
              const dash = n === 10 || (n >= 13 && n <= 39);
              return html`<tr><th>${n + 1}</th><td>${n}</td>${cols.slice(1).map((_, i) =>
                i === 16 && dash ? html`<td class="dash">-</td>` : i === 17 && dash ? html`<td class="enddash">-</td>` : html`<td></td>`)}</tr>`;
            })}
          </tbody>
        </table>
        <div class="vs">
          <button class="sb" aria-label="Scroll up">${pic(8, 5, svg`<path d="M0 5h8L4 0z" fill="#666"/>`)}</button>
          <div class="thumb"></div>
          <button class="sb push-y" aria-label="Scroll down">${pic(8, 5, svg`<path d="M0 0h8L4 5z" fill="#666"/>`)}</button>
        </div>
      </div>
      <div class="foot">
        <div class="nav">${pic(5, 8, svg`<path d="M5 0v8L0 4z" fill="#b5b5b5"/>`)}${pic(5, 8, svg`<path d="M0 0v8l5-4z" fill="#b5b5b5"/>`)}</div>
        <button class="st read">READ ME</button><button class="st sel">ForBilling</button><button class="st data">Data Validation Sheet</button>
        <button class="plus" aria-label="New sheet">${pic(17, 17, svg`<circle cx="8.500" cy="8.500" r="7.500" fill="none" stroke="#777"/><path d="M8.500 4.500v8M4.500 8.500h8" stroke="#666" stroke-width="2"/>`)}</button>
        <span class="grip">${pic(2, 12, svg`<path d="M0 0h2v2H0zM0 5h2v2H0zM0 10h2v2H0z" fill="#aaa"/>`)}</span>
        <div class="hs">
          <button class="sb" aria-label="Scroll left">${pic(5, 8, svg`<path d="M5 0v8L0 4z" fill="#666"/>`)}</button><div class="thumb"></div>
          <button class="sb push" aria-label="Scroll right">${pic(5, 8, svg`<path d="M0 0v8l5-4z" fill="#666"/>`)}</button>
        </div>
      </div>
      <div class="status"><span class="ready">Ready</span>
        ${pic(14, 14, svg`<path d="M1.500 3.500h12v10h-12zM3 7h2m1 0h2m1 0h3M3 9.500h2m1 0h2m1 0h3M3 12h2m1 0h2m1 0h3M6 3h8" fill="none" stroke="#666"/><circle cx="3" cy="3" r="3" fill="#777"/>`)}
        <div class="views">
          <button aria-label="Normal view">${pic(14, 13, svg`<path d="M.5.5h12v12H.5zM.5 4.500h12M.5 8.500h12M4.500.5v12M8.500.5v12" fill="none" stroke="#666"/>`)}</button>
          <button aria-label="Page layout view">${pic(14, 13, svg`<path d="M.5.5h12v12H.5zM3 2.500h7v8H3zM4.500 5h4M4.500 7h4M4.500 9h4" fill="none" stroke="#666"/>`)}</button>
          <button aria-label="Page break view">${pic(14, 13, svg`<path d="M.5.5h12v12H.5zM.5 7.500h8v-7M4.500.5v7" fill="none" stroke="#666"/>`)}</button>
        </div>
        <div class="zoom">${pic(8, 8, svg`<path d="M1 4h6" stroke="#555" stroke-width="2"/>`)}<input type="range" min="0" max="100" value="42" aria-label="Zoom">${pic(8, 8, svg`<path d="M0 4h8M4 0v8" stroke="#555" stroke-width="2"/>`)}</div>
        <span>85%</span>
      </div>`;
  }
}

/* ---------- browser window ---------- */

const pageIcon = pic(16, 18, svg`<path d="M1 1h3v15H1z" fill="#5aa3dc"/><path d="M5 1h8l2 3v13H5z" fill="#eef2f6" stroke="#b9c4cf" stroke-width=".7"/><path d="M7 7h6M7 9.500h6M7 12h6" stroke="#a9c4dc"/>`);
const bullet = pic(9, 11, svg`<ellipse cx="4.500" cy="5.500" rx="4.500" ry="5" fill="#a02323"/><ellipse cx="3" cy="3.500" rx="1.800" ry="2" fill="#dca0a0"/>`);

const navIcons: Array<[string, TemplateResult]> = [
  ["Journey", pic(34, 32, svg`<path d="M5 1h24v15h-5v-3a7 7 0 0 0-14 0v3H5z" fill="#dcdcdc"/><path d="M13 13h8l5 18H8z" fill="#dcdcdc"/><path d="M17 16v3m0 2v3m0 2v4" stroke="#58585b" stroke-width="2"/>`)],
  ["Clients", pic(34, 22, svg`<path d="M1 3l5-2 4 2 6-1 3 1 7-1 3-1 4 2v13l-4 1-4 2-6 3-6-1-6-5-6-1z" fill="#dcdcdc"/><path d="M7 3v13M27 3v12M10 12l6-6 9 9M12 15l3-3M15 18l3-3M18 19l2-2" stroke="#58585b" stroke-width="1.500" fill="none"/>`)],
  ["People", pic(34, 30, svg`<circle cx="17" cy="4" r="3" fill="#dcdcdc"/><circle cx="8" cy="8" r="3" fill="#dcdcdc"/><circle cx="26" cy="8" r="3" fill="#dcdcdc"/><path d="M12 9q5-3 10 0l1 7H11zM3 14q4-4 8 0v7H4zM23 14q4-4 8 0l-1 7-7-3z" fill="#dcdcdc"/><path d="M7 18q10-9 21 1-1 10-11 10T7 18z" fill="#dcdcdc" stroke="#58585b"/>`)],
  ["Settings", pic(34, 30, svg`<circle cx="12" cy="12" r="8.500" fill="none" stroke="#dcdcdc" stroke-width="3"/><circle cx="12" cy="12" r="10.500" fill="none" stroke="#dcdcdc" stroke-width="2.500" stroke-dasharray="4 4.200"/><circle cx="12" cy="12" r="3" fill="none" stroke="#dcdcdc" stroke-width="2"/><circle cx="27" cy="22" r="4" fill="none" stroke="#dcdcdc" stroke-width="3"/><circle cx="27" cy="22" r="6" fill="none" stroke="#dcdcdc" stroke-width="2" stroke-dasharray="2.500 2.200"/>`)],
  ["Attachments", pic(30, 26, svg`<path d="M14 2l9 13q3 6-1 9t-8-2L5 9Q2 4 5 2.500t6 2l9 13q1 3-1 4t-4-1L8 10" fill="none" stroke="#dcdcdc" stroke-width="1.700"/>`)],
  ["Dashboard", pic(32, 26, svg`<path d="M5 24Q1 19 1.500 13 3 1 16 1t14.500 12Q31 19 27 24q-3-5-11-5T5 24z" fill="#dcdcdc"/><circle cx="16" cy="15" r="3" fill="none" stroke="#58585b" stroke-width="1.300"/><path d="M18 13l7-8M16 2v3M3 13h3M26 13h3M6 6l2 2M6 21q10-7 20 0" fill="none" stroke="#58585b"/>`)],
  ["Help", pic(30, 30, svg`<circle cx="15" cy="15" r="14.500" fill="#b9b9b9"/><text x="15" y="21" text-anchor="middle" font-family="Open Sans, sans-serif" font-weight="700" font-size="16" fill="#58585b">?</text>`)],
];

@customElement("browser-window")
class BrowserWindow extends LitElement {
  static styles = [base, css`
    :host { display: flex; flex-direction: column; flex: 1; background: #fff; color: #333; font: 12px/16px "Noto Sans", "Open Sans", sans-serif; }
    .caps { display: flex; justify-content: flex-end; gap: 38px; height: 27px; padding: 8px 21px 0 0; }
    .chrome { display: flex; align-items: center; height: 27px; gap: 2px; padding: 0 10px 4px 0; }
    .round { border: 1px solid #aaa; border-radius: 50%; background: #fff; }
    .back { width: 38px; height: 38px; margin-bottom: -2px; }
    .fwd { width: 26px; height: 26px; margin: 0 1px; }
    .addr, .find { display: flex; align-items: center; height: 24px; border: 1px solid #aaa; background: #fff; padding: 0 4px; gap: 5px; }
    .addr { flex: 1; white-space: nowrap; }
    .addr .url { flex: 1; color: #777; }
    .url b { font-weight: 400; color: #000; }
    .tools { display: flex; gap: 10px; }
    .find { width: 478px; margin: 0 12px 0 6px; }
    .find input { flex: 1; border: 0; padding: 0; }
    .tabline { display: flex; height: 23px; background: linear-gradient(#fff, #ececec); }
    .btab { display: flex; align-items: center; gap: 4px; width: 200px; padding: 0 6px; border: 1px solid #bbb; border-bottom: 0; background: #fff; color: #000; white-space: nowrap; font-size: 11px; }
    .btab svg:last-child { margin-left: auto; }
    .new { width: 22px; background: #e0e0e0; border: 1px solid #bbb; border-left: 0; }
    .top { display: flex; align-items: center; height: 51px; padding: 0 26px 0 16px; }
    .burger { width: 30px; height: 30px; background: #ef8d00; border-radius: 2px; margin-right: 22px; }
    .brand { font: italic 700 26px/30px "Liberation Serif", serif; color: #5a5a5c; margin: 0 0 4px 9px; }
    .user { margin-left: auto; display: flex; align-items: center; gap: 4px; padding-right: 16px; padding-top: 4px; color: #333; }
    .main { display: flex; flex: 1; }
    .side { display: flex; flex-direction: column; width: 60px; background: #58585b; padding: 16px 2px 0 0; align-items: center; }
    .side button { height: 33px; margin-bottom: 29px; width: 40px; }
    .page { flex: 1; min-width: 0; background: linear-gradient(90deg, #eee, #fff 5px); font-family: "DejaVu Sans", sans-serif; font-size: 11px; }
    .mods { display: flex; gap: 5px; height: 40px; padding: 6px 5px 0; background: #f7f7f7; font: 600 12px/16px "Open Sans", sans-serif; }
    .mod { display: flex; align-items: center; width: 185px; background: #fff; border-radius: 3px 3px 0 0; padding: 0 5px 0 9px; gap: 7px; }
    .mod.off { background: #e4e4e4; color: #999; }
    .mod .x { margin: -12px 0 0 -2px; }
    .mod .pin { margin-left: auto; }
    h2 { font: 700 13px/18px "DejaVu Sans Condensed", "DejaVu Sans", sans-serif; margin: 0 12px 0 10px; border-bottom: 1px solid #999; display: flex; gap: 5px; align-items: center; }
    .first { padding: 16px 0 7px; }
    .help { margin-top: 27px; }
    ul { list-style: none; margin: -2px 0 0; padding: 0 0 0 12px; color: #000; }
    li { display: flex; align-items: center; gap: 8px; height: 21px; line-height: 16px; }
    li svg { margin-top: 2px; }
    .dim { color: #777; }
    .bills { margin: 104px 22px 0 5px; min-height: 226px; background: #fcfcfc; }
    .billbar { display: flex; justify-content: space-between; align-items: center; height: 25px; background: #5f2120; color: #fff; font: 700 12px/16px "DejaVu Sans Condensed", sans-serif; padding: 2px 14px 0 5px; }
    .bills table { width: 100%; }
    .bills th { height: 25px; background: #e8e7d8; border-top: 2px solid #d8d6c2; border-bottom: 2px solid #c0beac; border-left: 1px solid #c0beac; padding: 1px 6px 0; }
    .bills td { height: 25px; border-bottom: 1px solid #e0dccd; padding: 2px 5px 0; }
    .bills th.num, .bills td.num { text-align: right; padding-right: 18px; }
    .bills .c1 { width: 224px; }
    .bills .c3 { width: 320px; }
  `];

  render() {
    const x = (c: string) => pic(10, 10, svg`<path d="M.5.5l9 9M9.500.5l-9 9" stroke=${c}/>`);
    const link = (t: string, cls = "") => html`<li>${bullet}<a href="#" class=${cls}>${t}</a></li>`;
    return html`
      <div class="caps">
        ${pic(11, 11, svg`<path d="M0 5.500h11" stroke="#999"/>`)}
        ${pic(11, 11, svg`<path d="M.5 2.500h8v8h-8zM2.500 2V.5h8v8H9" fill="none" stroke="#999"/>`)}${x("#999")}
      </div>
      <div class="chrome">
        <button class="round back" aria-label="Back">${pic(24, 22, svg`<path d="M11 2L2 11l9 9v-4L8 13h14V9H8l3-3z" fill="#fff" stroke="#aaa"/>`)}</button>
        <button class="round fwd" aria-label="Forward">${pic(16, 14, svg`<path d="M8 1l6 6-6 6v-3l2-2H1V6h9L8 4z" fill="#fff" stroke="#aaa"/>`)}</button>
        <div class="addr">${pageIcon}<span class="url"><b>https:</b>//ipowerph.eps.ad.<b>pwcinternal.com</b>/#/modules/legacy/open?url=gui%2Fiportfolio%2Fdefault.aspx</span>
          ${caret}${pic(10, 12, svg`<path d="M1 5h8v7H1z" fill="#888"/><path d="M3 5V3q2-3 4 0v2" fill="none" stroke="#888" stroke-width="1.500"/>`)}
          ${pic(12, 12, svg`<path d="M10 6a4 4 0 1 1-1.500-3.500M10 0v4H6" fill="none" stroke="#555" stroke-width="1.500"/>`)}</div>
        <div class="find"><input aria-label="Search" value="Search...">${pic(12, 12, svg`<circle cx="7" cy="5" r="3.500" fill="none" stroke="#444" stroke-width="1.500"/><path d="M4.500 7.500L1 11" stroke="#444" stroke-width="2"/>`)}${caret}</div>
        <div class="tools">
          ${pic(16, 16, svg`<path d="M1 8l7-7 7 7h-2v7h-4v-5H7v5H3V8z" fill="none" stroke="#999"/>`)}
          ${pic(16, 16, svg`<path d="M8 1l2 5h5l-4 3.500 1.500 5.500L8 12l-4.500 3L5 9.500 1 6h5z" fill="none" stroke="#999"/>`)}
          ${pic(16, 16, svg`<circle cx="8" cy="8" r="5" fill="none" stroke="#999" stroke-width="1.500"/><circle cx="8" cy="8" r="6.800" fill="none" stroke="#999" stroke-width="2" stroke-dasharray="2.500 2.840"/><circle cx="8" cy="8" r="2" fill="none" stroke="#999"/>`)}
        </div>
      </div>
      <div class="tabline">
        <div class="btab">${pageIcon}iPower - Built by PwC, for P...${pic(8, 8, svg`<path d="M1 1l6 6M7 1L1 7" stroke="#999" stroke-width="2"/>`)}</div>
        <button class="new" aria-label="New tab">${pic(16, 18, svg`<path d="M2.500 3.500h10v13h-10z" fill="#fff" stroke="#888"/><path d="M11.500 0v8M7.500 4h8M9 1.500l5 5M14 1.500l-5 5" stroke="#f0a020" stroke-width="1.300"/>`)}</button>
      </div>
      <header class="top">
        <button class="burger" aria-label="Menu">${pic(14, 13, svg`<path d="M0 1.500h14M0 6h14M0 10.500h14" stroke="#fff" stroke-width="2.500"/>`)}</button>
        ${pic(37, 37, svg`<circle cx="18.500" cy="18.500" r="17.300" fill="#fff" stroke="#ef8d00" stroke-width="2"/><circle cx="10.500" cy="11.500" r="2.800" fill="#ef8d00"/><path d="M2.500 17q6-1 9 1.500 3 2 5.500 0Q26 13 30.500 5.500l4 5Q29 19 21 20l-1 2v13.500h-4V23h-1.500v12.500l-4-2V22Q7 19 2 20z" fill="#ef8d00"/>`)}
        <span class="brand">iPower</span>
        <span class="user">Jay Armand Ogayon (PH002839) ${caret}</span>
        ${pic(28, 28, svg`<path d="M4 20q3-2 3-8t6-6q6 0 6 6t3 8zM11 22q2 3 4 0M13 4v2" fill="none" stroke="#666" stroke-width="1.500"/><circle cx="20" cy="9" r="6.500" fill="#ef8d00"/><text x="20" y="12" text-anchor="middle" font-family="Open Sans, sans-serif" font-size="9" fill="#fff">0</text>`)}
      </header>
      <div class="main">
        <nav class="side">${navIcons.map(([n, i]) => html`<button aria-label=${n}>${i}</button>`)}</nav>
        <div class="page">
          <div class="mods">
            <div class="mod">${pic(20, 20, svg`<circle cx="10" cy="10" r="9.500" fill="#58585b"/><path d="M10 0v10H0" fill="none" stroke="#fff" stroke-width="1.300"/>`)}Portfolio
              <svg class="pic pin" width="16" height="16" viewBox="0 0 16 16"><path d="M9 1l6 6-2 .5-2 3.500v2L7.500 10 1 15l4-7-3-3 3 .3L9 3z" fill="#999"/></svg><span class="x">${x("#999")}</span></div>
            <div class="mod off">${pic(20, 20, svg`<circle cx="10" cy="10" r="9" fill="none" stroke="#aaa" stroke-width="1.200"/><path d="M10.500 4v7H5" fill="none" stroke="#aaa"/>`)}Time
              <svg class="pic pin" width="12" height="20" viewBox="0 0 12 20"><path d="M3 0h6v2l-1 5 3 4H7l-1 9-1-9H1l3-4-1-5z" fill="#000"/></svg><span class="x">${x("#999")}</span></div>
          </div>
          <h2 class="first">My portfolio</h2>
          <ul>${link("My portfolio view")}${link("Create Bill")}${link("Open Bill")}${link("Create Adjustment Note")}${link("Approve Bill", "dim")}${link("Debtor Management")}</ul>
          <section class="bills">
            <div class="billbar">My unprocessed bills:${pic(14, 14, svg`<path d="M2 6a5 5 0 0 1 9-2M12 8a5 5 0 0 1-9 2M12 1v4H8M2 13V9h4" fill="none" stroke="#fff" stroke-width="1.800"/>`)}</div>
            <table><colgroup><col class="c1"><col><col class="c3"></colgroup>
              <thead><tr><th>Debtor Name</th><th>Bill No.</th><th class="num">Total Net Bill Amt</th></tr></thead>
              <tbody><tr><td>Grand Taipan Land Development Inc.</td><td>MNL99800833</td><td class="num">167,500.00</td></tr></tbody></table>
          </section>
          <h2 class="help">${pic(12, 12, svg`<circle cx="6" cy="6" r="6" fill="#333"/><path d="M6 2v2M6 5.500V10M4.500 6H6M4.500 9.500h3" stroke="#fff" stroke-width="1.600"/>`)}Help</h2>
          <ul>${link("Knowledge Base")}${link("About Portfolio")}</ul>
        </div>
      </div>`;
  }
}

/* ---------- job selection window ---------- */

const jobCols: Array<[string, number]> = [["Client Name", 140], ["Client Co...", 90], ["Bill OU", 160], ["Job C...", 70], ["Job Offi...", 80], ["Job Operating Unit", 140], ["Job LoS", 100], ["Job Description", 200], ["CT", 200]];
const jobRows = [
  ["Grand Taipan Land D...", "31005999", "MNL620 - Resource Plus,...", "J000", "Manila", "Resource Plus, Inc.", "IFSS", "Accounting services", "EB"],
  ["Grand Taipan Land D...", "31005999", "MNL781 - BSP Business...", "J018", "Manila", "BSP Business Services", "IFS", "Accounting services", "EB"],
  ["Grand Taipan Land D...", "31005999", "MNL781 - BSP Business...", "J019", "", "", "", "Tax Compliance & Bookkeeping...", "EB"],
  ["Grand Taipan Land D...", "31005999", "MNL310 - Client Accounti...", "T001", "", "", "", "Tax Compliance & Bookkeeping...", "EB"],
];

@customElement("job-window")
class JobWindow extends LitElement {
  static styles = [base, css`
    :host { display: flex; flex-direction: column; background: #fff; border: 1px solid #9a9a9a; box-shadow: 0 2px 12px rgba(0, 0, 0, .4); color: #333; font: 11px/16px "DejaVu Sans", sans-serif; }
    .title { display: flex; align-items: center; height: 30px; gap: 4px; padding: 0 17px 0 7px; font: 12px/16px "Noto Sans", "Open Sans", sans-serif; color: #888; }
    .caps { display: flex; gap: 34px; margin-left: auto; }
    .lead { background: #5f2120; color: #fff; height: 44px; }
    .lead b { display: block; padding: 0 5px; font: 700 12px/16px "DejaVu Sans Condensed", sans-serif; }
    .lead p { margin: 0; padding: 5px 10px; }
    .form { display: grid; grid-template-columns: 151px 301px 155px 201px 291px 1fr; grid-template-rows: 23px 23px 23px; gap: 5px 0; height: 118px; padding: 5px 3px 0 0; align-content: start; }
    .form label { font: 700 12px/16px "DejaVu Sans Condensed", sans-serif; }
    .form > label { grid-column: 1; padding-left: 5px; }
    .form > .office { grid-column: 4; padding: 0; }
    .ticks { grid-column: 4 / 6; grid-row: 2 / 4; }
    .ticks label { display: flex; align-items: center; gap: 4px; height: 23px; }
    .ticks input { width: 13px; height: 13px; appearance: none; border: 1px solid #555; background: #fff; margin-top: -5px; }
    .field { display: flex; }
    input.t { border: 1px solid #8f8f8f; padding: 0 5px; height: 23px; min-width: 0; flex: 1; color: #555; box-shadow: inset 0 1px 2px #ddd; }
    .pair { display: grid; grid-template-columns: 234px 162px; gap: 5px; width: 401px; }
    .side { width: 23px; height: 23px; border: 1px solid #8f8f8f; border-left: 0; background: #eee; flex: none; }
    .drop { display: grid; align-items: center; }
    .drop > * { grid-area: 1 / 1; }
    .drop svg { justify-self: end; margin-right: 9px; pointer-events: none; }
    .drop select { border: 1px solid #8f8f8f; height: 23px; width: 100%; padding: 0 7px; background: #fff; color: #555; box-shadow: inset 0 1px 2px #ddd; }
    .btn { border: 1px solid #909090; background: #dedede; height: 24px; padding: 0 6px; }
    .search { grid-column: 6; grid-row: 4; justify-self: end; }
    .tool { display: flex; align-items: center; height: 24px; background: #5f2120; padding: 0 16px 0 5px; gap: 4px; }
    .tool .btn { width: 100px; height: 23px; padding: 0; }
    .tool svg:nth-of-type(1) { margin-left: auto; margin-right: 13px; }
    .area { flex: 1; background: #fcfcfc; }
    .jobs { width: 100%; }
    .jobs th { height: 25px; background: #e8e7d8; border-top: 2px solid #d8d6c2; border-bottom: 2px solid #c0beac; border-left: 2px solid #c0beac; padding: 2px 4px 0; }
    .jobs th:first-child { border-left-width: 1px; }
    .jobs td { height: 25px; border-bottom: 1px solid #e0dccd; padding: 3px 0 0 5px; }
    .jobs .hot td { background: #fae1bf; }
    .hscroll { display: flex; align-items: center; justify-content: space-between; height: 17px; padding: 0 17px 0 478px; background: #fcfcfc; }
    .thumb { width: 126px; height: 15px; background: #cdcdcd; margin: 0 auto 0 6px; }
    .total { height: 24px; background: #e8e7d8; border-top: 1px solid #d0cebb; font-weight: 700; line-height: 23px; padding-left: 986px; }
    .acts { display: flex; justify-content: flex-end; gap: 3px; padding: 2px 4px 0 0; height: 27px; }
    .zoom { display: flex; align-items: center; justify-content: flex-end; gap: 4px; height: 24px; padding-right: 24px; border-top: 1px solid #ddd; font: 12px/16px "Noto Sans", "Open Sans", sans-serif; }
    .zoom svg:last-child { margin-left: 12px; }
  `];

  render() {
    const arrow = pic(12, 8, svg`<path d="M1 1.500l5 5 5-5" fill="none" stroke="#111" stroke-width="2"/>`);
    return html`
      <div class="title"><svg class="pic" width="17" height="17" viewBox="0 0 24 24">${ieBody}</svg>Portfolio - Add Jobs to Bill - (PRD) - Internet Explorer
        <div class="caps">${pic(11, 11, svg`<path d="M0 6.500h11" stroke="#888"/>`)}${pic(11, 11, svg`<path d="M.5.5h9v9h-9z" fill="none" stroke="#888"/>`)}${pic(11, 11, svg`<path d="M.5.5l10 10M10.500.5l-10 10" stroke="#888"/>`)}</div></div>
      <div class="lead"><b>Job selection for bill</b><p>Select Job(s) to include in a bill.</p></div>
      <form class="form">
        <label for="debtor">Debtor</label>
        <div class="pair"><div class="field"><input class="t" id="debtor" value="Grand Taipan Land Development Inc."></div>
          <div class="field"><input class="t" aria-label="Debtor code" value="31005999"><button type="button" class="side" aria-label="Find debtor">${pic(11, 11, svg`<circle cx="5" cy="4.500" r="3.500" fill="none" stroke="#444" stroke-width="1.700"/><path d="M7.500 7l3 3.500" stroke="#444" stroke-width="2"/>`)}</button></div></div>
        <label class="office" for="office">Billing Office</label>
        <div class="drop"><select id="office"><option>Manila</option></select>${arrow}</div>
        <label for="type">Bill Type</label>
        <div class="drop"><select id="type"><option>Progress</option></select>${arrow}</div>
        <div class="ticks"><label><input type="checkbox">Show Inactive Codes</label><label><input type="checkbox">Include terminated jobs</label></div>
        <label for="date">Bill to date</label>
        <div class="field"><input class="t" id="date" value="5/6/2019"><button type="button" class="side" aria-label="Pick date">${pic(11, 12, svg`<path d="M0 2h11v10H0z" fill="#666"/><path d="M2.500 0v3M8.500 0v3" stroke="#555" stroke-width="1.500"/><path d="M1 5.500h9M1 8h9M1 10.500h9M3.500 5v6M6 5v6M8.500 5v6" stroke="#ddd" stroke-width=".7"/>`)}</button></div>
        <button type="button" class="btn search">Search</button>
      </form>
      <div class="tool"><button class="btn">Add Client</button><button class="btn">Remove Client</button>
        ${pic(13, 13, svg`<path d="M0 1h13L8 7v6l-3-2V7z" fill="#fff"/>`)}
        ${pic(14, 16, svg`<path d="M1 1h8l4 4v10H1zM9 1v4h4" fill="none" stroke="#fff" stroke-width="1.500"/><path d="M4.500 7l5 6M9.500 7l-5 6" stroke="#fff" stroke-width="1.500"/>`)}</div>
      <div class="area"><table class="jobs">
        <colgroup>${jobCols.map(([, w]) => html`<col style="width:${w}px">`)}<col></colgroup>
        <thead><tr>${jobCols.map(([n]) => html`<th>${n}</th>`)}<th></th></tr></thead>
        <tbody>${jobRows.map((r, i) => html`<tr class=${classMap({ hot: i === 1 })}>${r.map((v) => html`<td>${v}</td>`)}<td></td></tr>`)}</tbody>
      </table></div>
      <div class="hscroll">${pic(8, 12, svg`<path d="M7 1L2 6l5 5" fill="none" stroke="#444" stroke-width="1.800"/>`)}<div class="thumb"></div>${pic(8, 12, svg`<path d="M1 1l5 5-5 5" fill="none" stroke="#444" stroke-width="1.800"/>`)}</div>
      <div class="total">Total</div>
      <div class="acts"><button class="btn">Next &gt;&gt;</button><button class="btn">Cancel</button></div>
      <div class="zoom">${pic(12, 12, svg`<circle cx="5" cy="5" r="3.800" fill="none" stroke="#357ab8" stroke-width="1.300"/><path d="M8 8l3.500 3.500" stroke="#555" stroke-width="2"/><path d="M3 5h4M5 3v4" stroke="#357ab8"/>`)}100%${caret}</div>`;
  }
}

@customElement("message-box")
class MessageBox extends LitElement {
  static styles = [base, css`
    :host { display: flex; flex-direction: column; background: #fff; border: 1px solid #f5b8e8; box-shadow: 0 3px 14px rgba(0, 0, 0, .4); color: #000; font: 11px/13px "Noto Sans", "Open Sans", sans-serif; }
    .title { display: flex; align-items: center; justify-content: space-between; height: 30px; background: #f8c120; padding: 0 9px 0 8px; }
    .text { display: flex; flex: 1; gap: 10px; padding: 23px 22px 0; }
    .text > svg { margin-top: 1px; }
    .text p { margin: 0 0 13px; white-space: nowrap; }
    .in { display: block; padding-left: 12px; }
    .acts { display: flex; justify-content: flex-end; align-items: center; gap: 10px; height: 43px; background: #f0f0f0; padding: 0 16px; }
    .acts button { width: 73px; height: 21px; background: #e1e1e1; border: 1px solid #adadad; }
    .acts .ok { border: 2px solid #0078d7; }
  `];
  render() {
    return html`
      <div class="title">Message from webpage${pic(12, 12, svg`<path d="M1 1l10 10M11 1L1 11" stroke="#111" stroke-width="1.100"/>`)}</div>
      <div class="text">${pic(30, 30, svg`<circle cx="15" cy="15" r="14.500" fill="#0a6fce" stroke="#0d4a84"/><text x="15" y="23" text-anchor="middle" font-family="Open Sans, sans-serif" font-size="22" font-weight="600" fill="#fff">?</text>`)}
        <div><p>WARNING:<br>The following jobs have unapproved progress bills.<span class="in">31005999 J018 MNL : MNL 99800833 090 P</span></p><p>Do you want to continue?</p></div></div>
      <div class="acts"><button class="ok">OK</button><button>Cancel</button></div>`;
  }
}

/* ---------- two-monitor desktop ---------- */

@customElement("app-root")
class AppRoot extends LitElement {
  static styles = [base, css`
    :host { display: grid; grid-template-columns: 1fr 1fr; min-height: 100vh; overflow: hidden; }
    .screen { display: flex; min-width: 0; position: relative; }
    .screen > sheet-window { flex: 1; }
    .second { flex-direction: column; }
    job-window { position: absolute; left: 367px; top: 170px; width: 1206px; height: 759px; }
    message-box { position: absolute; left: 789px; top: 455px; width: 358px; height: 185px; }
  `];
  render() {
    return html`
      <div class="screen"><task-bar vertical></task-bar><sheet-window></sheet-window></div>
      <div class="screen second"><browser-window></browser-window><task-bar></task-bar>
        <job-window></job-window><message-box></message-box></div>`;
  }
}
